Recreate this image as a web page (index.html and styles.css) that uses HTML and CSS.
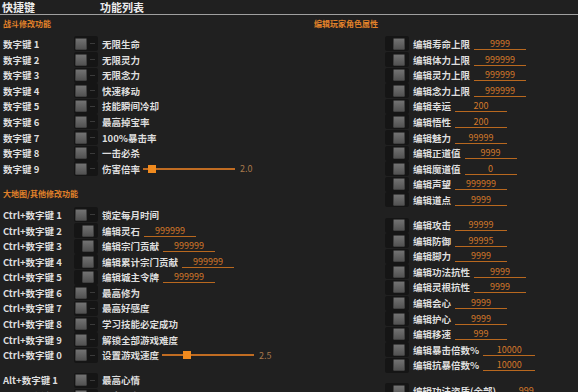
FILE: index.html
```html
<!DOCTYPE html>
<html>
<head>
    <title>快捷键 功能列表</title>
    <link rel="stylesheet" href="styles.css">
</head>
<body>
    <div class="header">
        <span class="col-key">快捷键</span>
        <span>功能列表</span>
    </div>

    <div class="main">
        <!-- left: hotkey list -->
        <div class="left">
            <div class="title">战斗修改功能</div>
            <div class="row"><span class="key">数字键 1</span><span class="toggle"></span><span class="name">无限生命</span></div>
            <div class="row"><span class="key">数字键 2</span><span class="toggle"></span><span class="name">无限灵力</span></div>
            <div class="row"><span class="key">数字键 3</span><span class="toggle"></span><span class="name">无限念力</span></div>
            <div class="row"><span class="key">数字键 4</span><span class="toggle"></span><span class="name">快速移动</span></div>
            <div class="row"><span class="key">数字键 5</span><span class="toggle"></span><span class="name">技能瞬间冷却</span></div>
            <div class="row"><span class="key">数字键 6</span><span class="toggle"></span><span class="name">最高掉宝率</span></div>
            <div class="row"><span class="key">数字键 7</span><span class="toggle"></span><span class="name">100%暴击率</span></div>
            <div class="row"><span class="key">数字键 8</span><span class="toggle"></span><span class="name">一击必杀</span></div>
            <div class="row">
                <span class="key">数字键 9</span><span class="toggle"></span><span class="name">伤害倍率</span>
                <span class="slider"><span class="handle" style="left: 5px"></span></span><span class="slider-val">2.0</span>
            </div>

            <div class="title title-gap">大地图/其他修改功能</div>
            <div class="row"><span class="key">Ctrl+数字键 1</span><span class="toggle"></span><span class="name">锁定每月时间</span></div>
            <div class="row"><span class="key">Ctrl+数字键 2</span><span class="toggle on"></span><span class="name">编辑灵石</span><span class="field">999999</span></div>
            <div class="row"><span class="key">Ctrl+数字键 3</span><span class="toggle on"></span><span class="name">编辑宗门贡献</span><span class="field">999999</span></div>
            <div class="row"><span class="key">Ctrl+数字键 4</span><span class="toggle on"></span><span class="name">编辑累计宗门贡献</span><span class="field">999999</span></div>
            <div class="row"><span class="key">Ctrl+数字键 5</span><span class="toggle on"></span><span class="name">编辑城主令牌</span><span class="field">999999</span></div>
            <div class="row"><span class="key">Ctrl+数字键 6</span><span class="toggle"></span><span class="name">最高修为</span></div>
            <div class="row"><span class="key">Ctrl+数字键 7</span><span class="toggle"></span><span class="name">最高好感度</span></div>
            <div class="row"><span class="key">Ctrl+数字键 8</span><span class="toggle"></span><span class="name">学习技能必定成功</span></div>
            <div class="row"><span class="key">Ctrl+数字键 9</span><span class="toggle"></span><span class="name">解锁全部游戏难度</span></div>
            <div class="row">
                <span class="key">Ctrl+数字键 0</span><span class="toggle"></span><span class="name">设置游戏速度</span>
                <span class="slider"><span class="handle" style="left: 21px"></span></span><span class="slider-val">2.5</span>
            </div>

            <div class="group-gap"></div>
            <div class="row"><span class="key">Alt+数字键 1</span><span class="toggle"></span><span class="name">最高心情</span></div>
            <div class="row"><span class="key">Alt+数字键 2</span><span class="toggle"></span><span class="name">最高体力</span></div>
        </div>

        <!-- right: player attributes -->
        <div class="right">
            <div class="title">编辑玩家角色属性</div>
            <div class="row"><span class="toggle on"></span><span class="name">编辑寿命上限</span><span class="field">9999</span></div>
            <div class="row"><span class="toggle on"></span><span class="name">编辑体力上限</span><span class="field">999999</span></div>
            <div class="row"><span class="toggle on"></span><span class="name">编辑灵力上限</span><span class="field">999999</span></div>
            <div class="row"><span class="toggle on"></span><span class="name">编辑念力上限</span><span class="field">999999</span></div>
            <div class="row"><span class="toggle on"></span><span class="name">编辑幸运</span><span class="field">200</span></div>
            <div class="row"><span class="toggle on"></span><span class="name">编辑悟性</span><span class="field">200</span></div>
            <div class="row"><span class="toggle on"></span><span class="name">编辑魅力</span><span class="field">99999</span></div>
            <div class="row"><span class="toggle on"></span><span class="name">编辑正道值</span><span class="field">9999</span></div>
            <div class="row"><span class="toggle on"></span><span class="name">编辑魔道值</span><span class="field">0</span></div>
            <div class="row"><span class="toggle on"></span><span class="name">编辑声望</span><span class="field">999999</span></div>
            <div class="row"><span class="toggle on"></span><span class="name">编辑道点</span><span class="field">9999</span></div>

            <div class="group-gap"></div>
            <div class="row"><span class="toggle on"></span><span class="name">编辑攻击</span><span class="field">99999</span></div>
            <div class="row"><span class="toggle on"></span><span class="name">编辑防御</span><span class="field">99995</span></div>
            <div class="row"><span class="toggle on"></span><span class="name">编辑脚力</span><span class="field">9999</span></div>
            <div class="row"><span class="toggle on"></span><span class="name">编辑功法抗性</span><span class="field">9999</span></div>
            <div class="row"><span class="toggle on"></span><span class="name">编辑灵根抗性</span><span class="field">9999</span></div>
            <div class="row"><span class="toggle on"></span><span class="name">编辑会心</span><span class="field">9999</span></div>
            <div class="row"><span class="toggle on"></span><span class="name">编辑护心</span><span class="field">9999</span></div>
            <div class="row"><span class="toggle on"></span><span class="name">编辑移速</span><span class="field">999</span></div>
            <div class="row"><span class="toggle on"></span><span class="name">编辑暴击倍数%</span><span class="field">10000</span></div>
            <div class="row"><span class="toggle on"></span><span class="name">编辑抗暴倍数%</span><span class="field">10000</span></div>

            <div class="group-gap"></div>
            <div class="row"><span class="toggle on"></span><span class="name">编辑功法资质(全部)</span><span class="field">999</span></div>
        </div>
    </div>
</body>
</html>
```

FILE: styles.css
```css
body {
    margin: 0;
    background-color: #202020;
    color: #dedede;
    font-family: 'Noto Sans CJK SC', 'Liberation Sans', sans-serif;
    overflow: hidden;
}

.header {
    display: flex;
    height: 14px;
    line-height: 14px;
    padding-left: 2px;
    border-bottom: 1px solid #a0a0a0;
    font-size: 11px;
    font-weight: bold;
    color: #ececec;
}

.col-key {
    width: 98px;
}

.main {
    display: grid;
    grid-template-columns: 290px 1fr;
}

.title {
    height: 21.2px;
    box-sizing: border-box;
    padding: 3px 0 0 3px;
    line-height: 12px;
    font-size: 8px;
    font-weight: bold;
    color: #e2822a;
}

.title-gap {
    height: 30.6px;
    padding-top: 11.4px;
}

.right .title {
    padding-left: 24px;
}

.group-gap {
    height: 9.6px;
}

.row {
    display: flex;
    align-items: center;
    height: 15.6px;
    padding-left: 3px;
    font-size: 9.5px;
    font-weight: bold;
    white-space: nowrap;
}

.right .row {
    padding-left: 95px;
}

.key {
    width: 71px;
}

.toggle {
    display: flex;
    align-items: center;
    width: 24px;
    height: 15px;
    margin-right: 4px;
    padding-left: 1px;
    box-sizing: border-box;
    background: #151515;
    border-radius: 2px;
}

.toggle::before {
    content: "";
    width: 12px;
    height: 12px;
    box-sizing: border-box;
    border: 1px solid #404040;
    border-radius: 1px;
    background: linear-gradient(#727272, #525252);
}

/* faint track mark on the empty side */
.toggle::after {
    content: "";
    width: 5px;
    height: 1px;
    margin-left: 3px;
    background: #3a3a3a;
}

.toggle.on {
    padding-left: 8px;
}

.toggle.on::after {
    display: none;
}

.field {
    width: 52px;
    margin-left: 4px;
    border-bottom: 1px solid #b8681f;
    text-align: center;
    font-size: 9px;
    font-weight: normal;
    line-height: 11px;
    color: #d4782a;
}

.slider {
    position: relative;
    width: 92px;
    height: 2px;
    margin-left: 3px;
    background: #c06c22;
}

.handle {
    position: absolute;
    top: -3px;
    width: 8px;
    height: 8px;
    background: #f08a1e;
}

.slider-val {
    margin-left: 5px;
    font-size: 9px;
    font-weight: normal;
    color: #a8784c;
}
```
